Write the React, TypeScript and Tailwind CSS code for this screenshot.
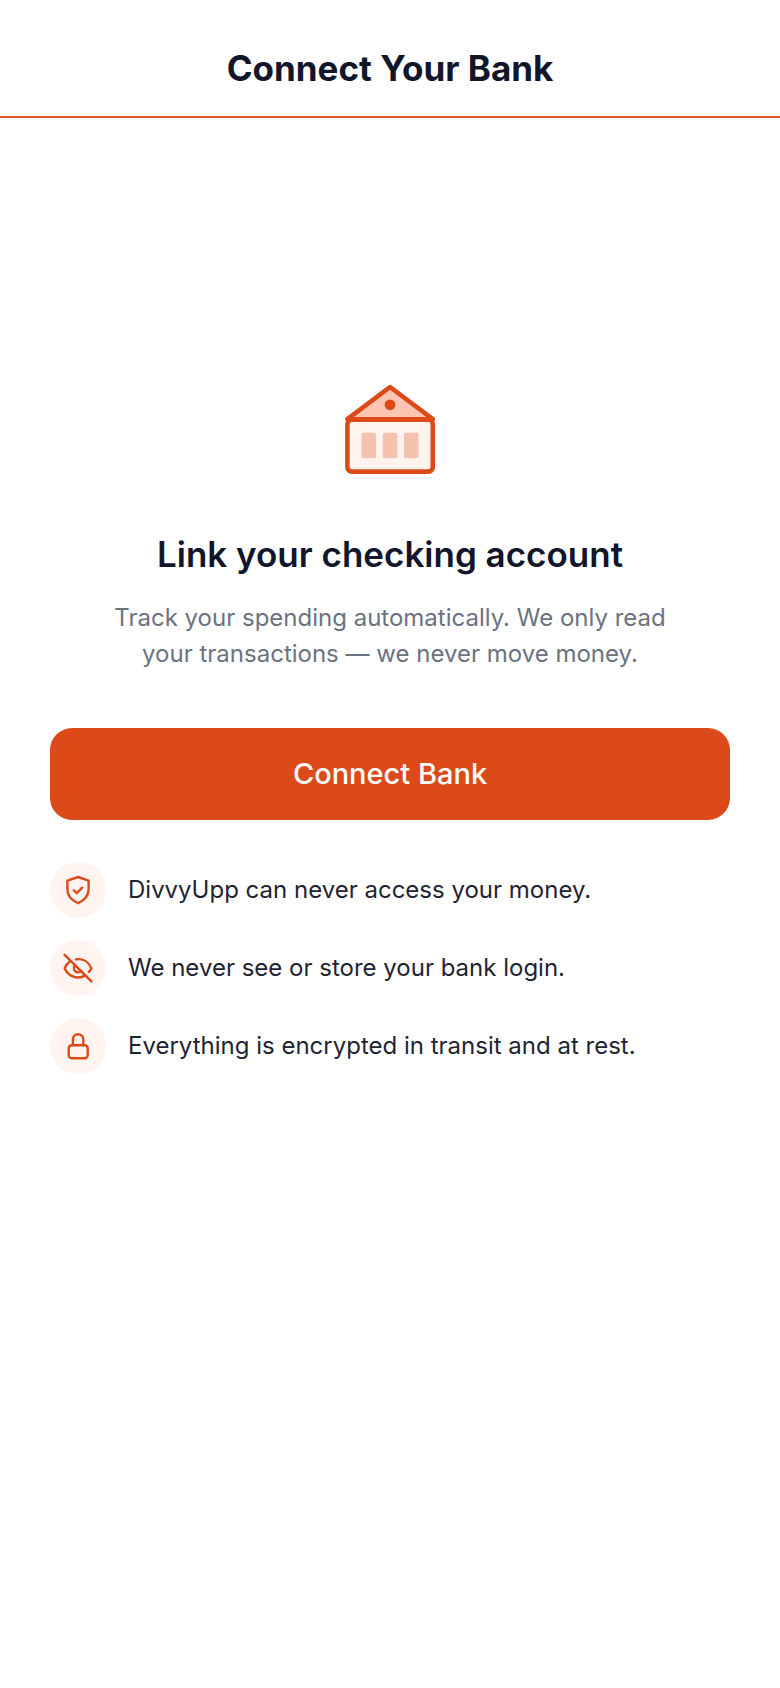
import { ReactNode } from "react";

interface IFeature {
  icon: ReactNode;
  text: string;
}

const OutlineIcon = ({ children }: { children: ReactNode }) => (
  <svg
    className="size-9"
    viewBox="0 2 36 36"
    fill="none"
    stroke="currentColor"
    strokeWidth="2.4"
    strokeLinecap="round"
    strokeLinejoin="round"
    aria-hidden="true"
  >
    {children}
  </svg>
);

const ShieldIcon = () => (
  <OutlineIcon>
    <path d="M18 7 28.6 10.6V19.5C28.6 26.4 24.6 30.2 18 33.2 11.4 30.2 7.4 26.4 7.4 19.5V10.6Z" />
    <path d="m13.8 20.4 3 2.8 5.4-5.5" />
  </OutlineIcon>
);

const EyeOffIcon = () => (
  <OutlineIcon>
    <path d="M4.6 6.8 31.4 33.4" />
    <path d="M15.8 11.4C23.5 10.2 29 14.4 31.3 20.2 30.7 21.6 29.9 22.8 28.9 23.9" />
    <path d="M9.8 13.4C7.5 15 5.8 17.3 4.7 20.2 8.2 28.8 17.8 31.6 25 27.6" />
    <path d="M14.8 17C12.6 20.4 14.6 24.4 18 24.4 19.3 24.4 20.5 23.9 21.3 23" />
  </OutlineIcon>
);

const LockIcon = () => (
  <OutlineIcon>
    <rect x="8.7" y="19.3" width="19" height="12.9" rx="3" />
    <path d="M12.9 19.3V13.4a5.2 5.2 0 0 1 10.4 0v5.9" />
  </OutlineIcon>
);

const BankIcon = () => (
  <svg
    className="size-[120px]"
    viewBox="0 0 120 120"
    fill="none"
    aria-hidden="true"
  >
    <rect x="17.4" y="49.6" width="85.4" height="52" rx="4.5" fill="#fff3ed" stroke="#dd4a1a" strokeWidth="4.6" />
    <path d="M60 17 17.4 49.2h85.4Z" fill="#fdc5b2" stroke="#dd4a1a" strokeWidth="4.6" strokeLinejoin="round" />
    <circle cx="60" cy="34.8" r="5.4" fill="#dd4a1a" />
    <g fill="#f6c2b0">
      <rect x="31.5" y="62.8" width="14.5" height="25.4" rx="2" />
      <rect x="52.8" y="62.8" width="14.5" height="25.4" rx="2" />
      <rect x="74" y="62.8" width="14.5" height="25.4" rx="2" />
    </g>
  </svg>
);

const features: IFeature[] = [
  { icon: <ShieldIcon />, text: "DivvyUpp can never access your money." },
  { icon: <EyeOffIcon />, text: "We never see or store your bank login." },
  {
    icon: <LockIcon />,
    text: "Everything is encrypted in transit and at rest.",
  },
];

const App = () => {
  return (
    <div className="min-h-screen bg-white font-['Inter',sans-serif]">
      <header className="border-b-2 border-[#e2562a] pt-11 pb-6 text-center">
        <h1 className="text-[35px] leading-[48px] font-bold text-[#12162b]">
          Connect Your Bank
        </h1>
      </header>
      <main className="flex flex-col items-center px-[50px] pt-[252px] pb-12">
        <BankIcon />
        <h2 className="mt-10 text-center text-[35px] leading-[48px] font-semibold text-[#12162b]">
          Link your checking account
        </h2>
        <p className="mt-[22px] max-w-[600px] text-center text-2xl leading-9 text-[#6b7280]">
          Track your spending automatically. We only read your transactions — we
          never move money.
        </p>
        <button
          type="button"
          className="mt-14 h-[92px] w-full rounded-[22px] bg-[#dd4a1a] text-[29px] font-medium text-white"
        >
          Connect Bank
        </button>
        <ul className="mt-[42px] flex w-full flex-col gap-[22px]">
          {features.map((feature) => (
            <li key={feature.text} className="flex items-center gap-[22px]">
              <span className="flex size-14 shrink-0 items-center justify-center rounded-full bg-[#fff4ef] text-[#dd4a1a]">
                {feature.icon}
              </span>
              <span className="text-2xl leading-9 text-[#1f2433]">
                {feature.text}
              </span>
            </li>
          ))}
        </ul>
      </main>
    </div>
  );
};

export default App;
